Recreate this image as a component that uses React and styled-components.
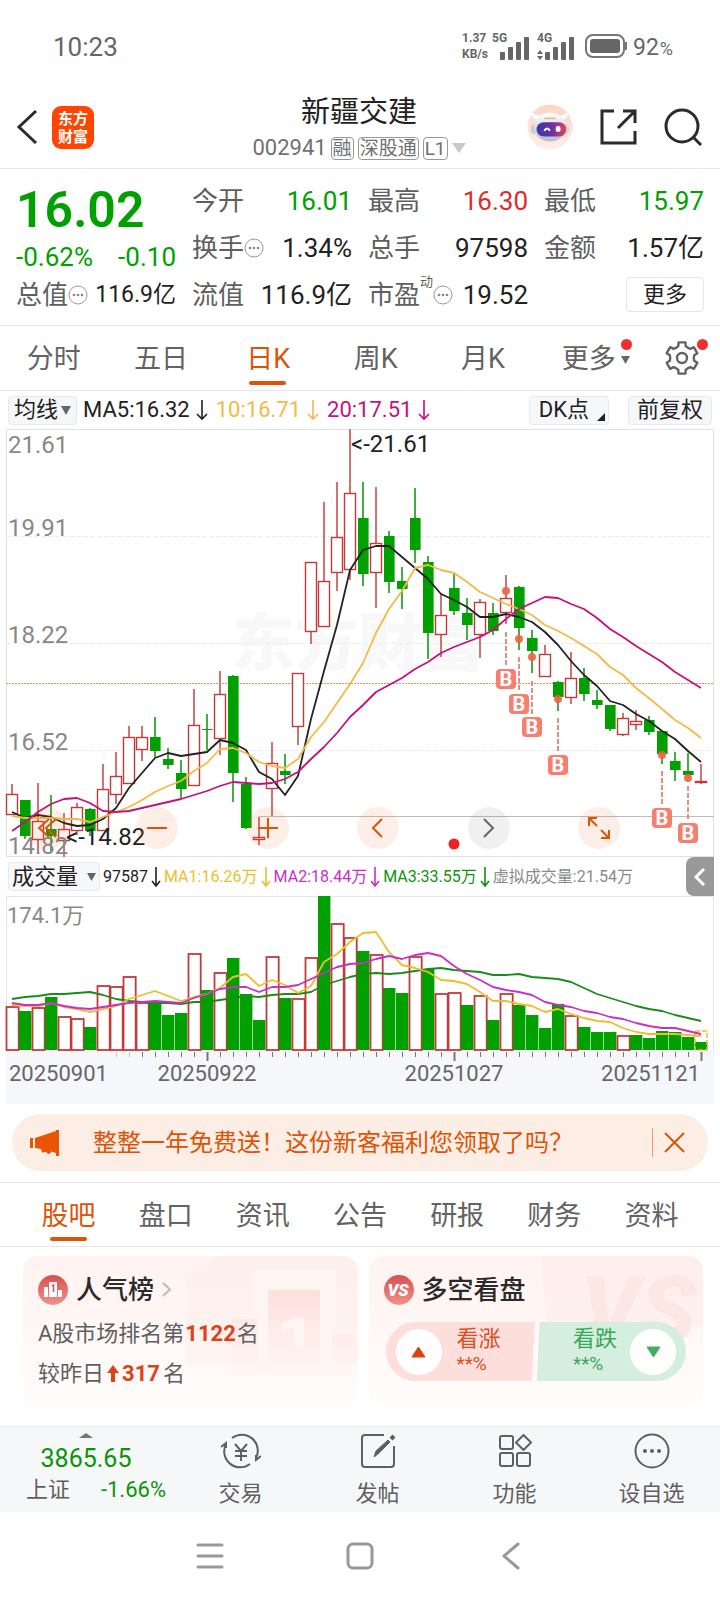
import React from 'react';
import styled, { createGlobalStyle } from 'styled-components';

const color = {
  green: '#00a000',
  red: '#ee2f2f',
  orange: '#dd5409',
  ink: '#222',
  text: '#5f5f5f',
  muted: '#8a8a8a',
  line: '#e6e6e8',
  panel: '#f6f7fa',
};

const Global = createGlobalStyle`
  * { box-sizing: border-box; }
  body {
    margin: 0;
    background: #fff;
    color: ${color.ink};
    font-family: Roboto, "Noto Sans CJK SC", sans-serif;
    font-size: 22px;
    line-height: 1;
  }
  button {
    margin: 0;
    padding: 0;
    border: 0;
    background: none;
    color: inherit;
    font: inherit;
    cursor: pointer;
  }
  svg { display: block; flex: none; }
  h1, h2, p, dl, dt, dd { margin: 0; font: inherit; }
`;

const Screen = styled.div`
  display: flex;
  flex-direction: column;
  width: 100%;
`;

/* ---------- status bar ---------- */

const StatusBar = styled.div`
  display: flex;
  align-items: center;
  justify-content: space-between;
  height: 84px;
  padding: 8px 47px 0 53px;
  color: #666;
`;

const Clock = styled.span`
  padding-top: 2px;
  font-size: 26px;
`;

const StatusGroup = styled.div`
  display: flex;
  align-items: center;
  gap: 4px;
`;

const NetSpeed = styled.span`
  font-size: 12px;
  line-height: 16px;
  font-weight: 700;
`;

const Battery = styled.span`
  display: flex;
  align-items: baseline;
  gap: 1px;
  padding: 2px 0 0 2px;
  font-size: 23px;
  small { font-size: 18px; }
`;

/* ---------- header ---------- */

const Header = styled.header`
  display: grid;
  grid-template-columns: 1fr auto 1fr;
  align-items: center;
  height: 85px;
  padding: 2px 18px 0 16px;
  border-bottom: 1px solid ${color.line};
`;

const HeaderSide = styled.div`
  display: flex;
  align-items: center;
  justify-content: ${(p) => (p.$end ? 'flex-end' : 'flex-start')};
  gap: ${(p) => (p.$end ? '27px' : '14px')};
`;

const Logo = styled.button`
  width: 42px;
  height: 43px;
  border-radius: 9px;
  background: #ff4500;
  color: #fff;
  font-family: "Noto Sans CJK SC", sans-serif;
  font-size: 15px;
  font-weight: 700;
  line-height: 18px;
`;

const TitleBlock = styled.div`
  display: flex;
  flex-direction: column;
  align-items: center;
  gap: 8px;
  padding-top: 2px;
`;

const StockName = styled.h1`
  font-size: 29px;
  line-height: 32px;
`;

const CodeRow = styled.div`
  display: flex;
  align-items: center;
  gap: 4px;
  color: #707070;
  font-size: 22px;
  line-height: 24px;
`;

const Badge = styled.span`
  height: 23px;
  padding: 0 1px;
  border: 1px solid #999;
  border-radius: 4px;
  font-size: 19px;
  line-height: 21px;
`;

/* ---------- quote ---------- */

const Quote = styled.section`
  display: grid;
  grid-template-columns: repeat(4, minmax(0, 1fr));
  grid-template-rows: repeat(3, 47px);
  column-gap: 16px;
  padding: 8px 16px 7px;
  border-bottom: 1px solid ${color.line};
  color: ${color.text};
  font-size: 26px;
`;

const PriceBlock = styled.div`
  display: flex;
  flex-direction: column;
  grid-row: span 2;
  color: ${color.green};
`;

const Price = styled.strong`
  font-size: 50px;
  font-weight: 600;
  line-height: 66px;
`;

const Change = styled.span`
  display: flex;
  justify-content: space-between;
  line-height: 28px;
`;

const Metric = styled.dl`
  display: flex;
  align-items: center;
  justify-content: space-between;
  white-space: nowrap;
  dt { display: flex; align-items: center; height: 47px; }
  dd { color: ${(p) => p.$tone || color.ink}; font-size: ${(p) => (p.$small ? '23px' : '26px')}; }
`;

const Sup = styled.sup`
  align-self: flex-start;
  padding-top: 4px;
  font-size: 13px;
  line-height: 1;
`;

const MoreButton = styled.button`
  align-self: center;
  justify-self: end;
  width: 78px;
  height: 35px;
  border: 1px solid ${color.line};
  border-radius: 4px;
  color: ${color.ink};
  font-size: 22px;
`;

/* ---------- tabs ---------- */

const TabBar = styled.nav`
  display: flex;
  height: 65px;
  padding: ${(p) => (p.$inset ? '0 20px' : '0')};
  border-top: ${(p) => (p.$inset ? `1px solid ${color.line}` : '0')};
  border-bottom: 1px solid ${color.line};
`;

const Tab = styled.button`
  position: relative;
  display: flex;
  flex: 1;
  align-items: center;
  justify-content: center;
  gap: 5px;
  padding-top: 3px;
  color: ${(p) => (p.$on ? color.orange : '#636363')};
  font-size: 27px;
  &::after {
    content: '';
    display: ${(p) => (p.$on ? 'block' : 'none')};
    position: absolute;
    left: calc(50% - 19px);
    bottom: 5px;
    width: 37px;
    height: 4px;
    border-radius: 2px;
    background: ${color.orange};
  }
`;

const MoreLabel = styled.span`
  padding-left: 11px;
`;

const GearTab = styled(Tab)`
  flex: 0 0 76px;
  padding-top: 0;
`;

const Dot = styled.i`
  position: absolute;
  top: 13px;
  right: 12px;
  width: 11px;
  height: 11px;
  border-radius: 50%;
  background: ${color.red};
`;

/* ---------- chart ---------- */

const ChartArea = styled.section`
  display: flex;
  flex-direction: column;
  padding: 0 6px;
`;

const LegendRow = styled.div`
  display: flex;
  align-items: center;
  gap: ${(p) => (p.$tight ? '3px' : '6px')};
  height: ${(p) => (p.$tight ? '39px' : '38px')};
  padding-left: 2px;
  font-size: ${(p) => (p.$tight ? '16px' : '22px')};
  white-space: nowrap;
`;

const Chip = styled.button`
  display: flex;
  align-items: center;
  justify-content: center;
  gap: ${(p) => (p.$wide ? '9px' : '3px')};
  height: 29px;
  padding: 0 ${(p) => (p.$wide ? '3px' : p.$roomy ? '8px' : '5px')};
  border: 1px solid #e6e9ee;
  border-radius: 4px;
  background: ${color.panel};
  color: ${color.ink};
  font-size: 22px;
`;

const CornerChip = styled(Chip)`
  gap: 8px;
  padding: 0 3px 0 9px;
  svg { align-self: flex-end; margin-bottom: 3px; }
`;

const Legend = styled.span`
  display: flex;
  align-items: center;
  gap: ${(p) => (p.$tight ? '2px' : '5px')};
  color: ${(p) => p.$c};
`;

const ChipGroup = styled.div`
  display: flex;
  gap: 19px;
  margin-left: auto;
  padding-right: 2px;
`;

const SideTab = styled.button`
  display: flex;
  align-items: center;
  justify-content: center;
  width: 28px;
  height: 39px;
  margin-left: auto;
  border-radius: 8px 0 0 8px;
  background: #999;
`;

const ChartBox = styled.div`
  position: relative;
  > svg { width: 100%; height: auto; overflow: visible; }
`;

const ChartTools = styled.div`
  position: absolute;
  left: 20px;
  right: 94px;
  bottom: 8px;
  display: flex;
  justify-content: space-between;
`;

const RoundTool = styled.button`
  display: flex;
  align-items: center;
  justify-content: center;
  width: 42px;
  height: 42px;
  border-radius: 50%;
  background: ${(p) => (p.$grey ? 'rgba(90, 90, 90, 0.09)' : 'rgba(240, 110, 40, 0.11)')};
`;

/* ---------- banner ---------- */

const Banner = styled.aside`
  display: flex;
  align-items: center;
  height: 57px;
  margin: 10px 12px 11px;
  padding: 0 23px 0 18px;
  border-radius: 29px;
  background: #fdeee5;
  color: ${color.orange};
  p { flex: 1; padding-left: 33px; font-size: 24px; white-space: nowrap; }
`;

const CloseButton = styled.button`
  padding: 4px 0 4px 11px;
  border-left: 1px solid #eb9a70;
`;

/* ---------- cards ---------- */

const Cards = styled.section`
  display: grid;
  grid-template-columns: repeat(2, minmax(0, 1fr));
  gap: 11px;
  padding: 9px 17px 20px 23px;
`;

const Card = styled.article`
  position: relative;
  display: flex;
  flex-direction: column;
  height: 150px;
  padding: 18px 15px 0;
  border-radius: 15px;
  overflow: hidden;
  background: linear-gradient(#fff3f1, #fffcfb);
  color: ${color.text};
  > * { position: relative; }
`;

const CardArt = styled.svg`
  && { position: absolute; }
  top: 0;
  right: 0;
`;

const CardTitle = styled.h2`
  display: flex;
  align-items: center;
  gap: 8px;
  height: 31px;
  color: #2b2b2b;
  font-size: 26px;
  font-weight: 500;
`;

const CardLine = styled.p`
  display: flex;
  align-items: center;
  gap: ${(p) => (p.$spaced ? '3px' : '1px')};
  height: 40px;
  b { color: #dc4318; }
  &:first-of-type { margin-top: 9px; }
`;

const Vote = styled.div`
  display: flex;
  gap: 2px;
  height: 59px;
  margin: 17px 2px 0;
  border-radius: 30px;
  overflow: hidden;
`;

const VoteSide = styled.button`
  display: flex;
  flex: 1;
  flex-direction: ${(p) => (p.$down ? 'row-reverse' : 'row')};
  align-items: center;
  gap: ${(p) => (p.$down ? '13px' : '15px')};
  padding: 0 10px;
  background: ${(p) => (p.$down ? '#d5eedd' : '#fcdedb')};
  color: ${(p) => (p.$down ? '#3aa75b' : '#e04b1f')};
  text-align: left;
  clip-path: ${(p) => (p.$down
    ? 'polygon(3px 0, 100% 0, 100% 100%, 0 100%)'
    : 'polygon(0 0, 100% 0, calc(100% - 3px) 100%, 0 100%)')};
  div { padding-bottom: 4px; }
  span { display: block; font-size: 22px; line-height: 27px; }
  small { display: block; font-size: 19px; line-height: 23px; }
`;

const VoteDot = styled.i`
  display: flex;
  align-items: center;
  justify-content: center;
  width: 46px;
  height: 46px;
  border-radius: 50%;
  background: #fff;
`;

/* ---------- bottom ---------- */

const BottomNav = styled.nav`
  display: flex;
  height: 86px;
  border-top: 1px solid ${color.line};
  background: #f6f7f9;
  color: ${color.text};
`;

const IndexButton = styled.button`
  display: flex;
  flex: 0 0 172px;
  flex-direction: column;
  align-items: center;
  padding-top: 6px;
  color: #0a940a;
`;

const IndexValue = styled.span`
  margin-top: 5px;
  font-size: 25px;
  line-height: 32px;
`;

const IndexRow = styled.span`
  display: flex;
  justify-content: space-between;
  align-self: flex-end;
  width: 146px;
  padding-right: 6px;
  line-height: 30px;
  em { color: ${color.text}; font-style: normal; }
`;

const NavButton = styled.button`
  display: flex;
  flex: 1;
  flex-direction: column;
  align-items: center;
  gap: 9px;
  padding-top: 6px;
  line-height: 32px;
`;

const SystemNav = styled.nav`
  display: flex;
  align-items: center;
  justify-content: center;
  gap: 122px;
  height: 88px;
`;

const Stroke = ({ w, h, d, c = color.text, sw = 2, fill = 'none', children, ...rest }) => (
  <svg width={w} height={h} viewBox={`0 0 ${w} ${h}`} fill={fill} stroke={c} strokeWidth={sw} {...rest}>
    {d && <path d={d} />}
    {children}
  </svg>
);

const Caret = ({ w = 9, h = 10, c = '#666' }) => (
  <svg width={w} height={h} viewBox="0 0 10 10" preserveAspectRatio="none"><path d="M0 0H10L5 10Z" fill={c} /></svg>
);

const DownArrow = ({ c, small }) => (
  <Stroke w={small ? 11 : 15} h={22} c={c} sw={1.6} d={small ? 'M6 1V20M2 15L6 20L10 15' : 'M7 1V20M2 15L7 20L12 15'} />
);

const InfoDot = () => (
  <Stroke w={20} h={20} c="#999" sw={1}>
    <circle cx="10" cy="10" r="9" />
    <g fill="#888" stroke="none"><circle cx="6" cy="10" r="1.3" /><circle cx="10" cy="10" r="1.3" /><circle cx="14" cy="10" r="1.3" /></g>
  </Stroke>
);

const STEP = 13;
const cx = (k) => 6 + STEP * k;

// direction, high, body top, body bottom, low — one entry per trading day
const candles = [
  ['r', 355, 365, 385, 385], ['g', 371, 371, 407, 410], ['r', 354, 392, 410, 424], ['g', 366, 400, 407, 423],
  ['r', 384, 400, 411, 428], ['r', 374, 378, 401, 406], ['g', 379, 380, 402, 407], ['r', 335, 360, 401, 402],
  ['r', 323, 347, 365, 375], ['r', 297, 308, 354, 354], ['r', 297, 308, 320, 332], ['g', 288, 308, 322, 328],
  ['g', 319, 330, 336, 340], ['g', 331, 344, 360, 369], ['r', 260, 296, 356, 356], ['g', 285, 300, 301, 321],
  ['r', 242, 265, 309, 326], ['g', 246, 247, 344, 373], ['g', 348, 355, 399, 400], ['r', 388, 408, 410, 416],
  ['r', 313, 334, 359, 387], ['g', 325, 342, 346, 355], ['r', 244, 244, 297, 316], ['r', 133, 133, 202, 215],
  ['r', 73, 152, 197, 197], ['r', 53, 108, 143, 162], ['r', 0, 64, 140, 151], ['g', 53, 89, 145, 157],
  ['r', 58, 114, 143, 179], ['g', 102, 107, 153, 164], ['g', 138, 152, 160, 180], ['g', 59, 89, 121, 134],
  ['g', 127, 133, 204, 230], ['r', 164, 186, 205, 228], ['g', 144, 159, 182, 186], ['g', 169, 184, 196, 211],
  ['r', 170, 173, 205, 229], ['g', 174, 184, 202, 206], ['r', 146, 169, 183, 195], ['g', 157, 158, 199, 221],
  ['g', 201, 209, 222, 244], ['r', 216, 225, 247, 248], ['g', 252, 253, 268, 282], ['r', 223, 249, 268, 275],
  ['g', 239, 249, 265, 272], ['g', 261, 271, 276, 280], ['g', 276, 276, 300, 302], ['r', 284, 289, 305, 307],
  ['r', 281, 292, 295, 301], ['g', 287, 291, 303, 306], ['g', 302, 302, 325, 335], ['g', 323, 332, 341, 352],
  ['g', 324, 342, 346, 349], ['r', 335, 352, 353, 355],
];

const ma5 = [383, 389, 386, 388, 394, 397, 396, 390, 379, 359, 344, 329, 324, 327, 325, 323, 311, 314, 321, 343, 350, 366, 347, 290, 242, 196, 141, 121, 117, 117, 128, 139, 150, 165, 171, 178, 188, 188, 185, 188, 193, 203, 216, 232, 246, 257, 272, 276, 285, 292, 302, 310, 322, 333];
const ma10 = [387, 389, 389, 389, 390, 390, 393, 388, 383, 378, 371, 363, 357, 352, 342, 334, 320, 319, 324, 333, 337, 339, 330, 308, 293, 274, 255, 234, 204, 180, 162, 139, 136, 141, 144, 153, 163, 169, 175, 180, 186, 196, 202, 209, 217, 225, 238, 246, 259, 269, 280, 291, 299, 309];
const ma20 = [402, 393, 383, 375, 370, 369, 374, 382, 383, 382, 379, 376, 373, 370, 366, 362, 357, 353, 354, 355, 354, 350, 343, 330, 318, 304, 288, 276, 263, 256, 249, 240, 233, 224, 218, 213, 208, 201, 190, 180, 174, 168, 169, 175, 180, 189, 200, 208, 217, 225, 233, 243, 251, 259];

const volumeTops = [110, 115, 111, 101, 120, 122, 131, 89, 90, 80, 106, 106, 119, 117, 57, 94, 76, 62, 98, 124, 60, 102, 102, 61, 0, 27, 41, 55, 58, 92, 97, 60, 73, 97, 96, 109, 99, 124, 97, 109, 119, 132, 108, 119, 131, 136, 136, 139, 139, 142, 135, 136, 141, 146];
const volumeUp = [0, 2, 4, 5, 7, 8, 9, 10, 14, 16, 20, 22, 23, 25, 26, 28, 31, 33, 34, 36, 38, 43, 47];
const vma1 = [109, 110, 110, 107, 111, 113, 116, 113, 110, 103, 99, 95, 100, 105, 101, 98, 92, 81, 78, 90, 84, 89, 97, 90, 66, 58, 46, 37, 36, 56, 69, 72, 76, 84, 85, 88, 96, 105, 105, 108, 110, 116, 113, 118, 122, 125, 126, 132, 136, 138, 138, 138, 139, 140];
const vma2 = [107, 109, 109, 107, 110, 112, 113, 111, 109, 107, 106, 105, 106, 107, 102, 98, 93, 91, 91, 96, 91, 91, 89, 83, 77, 71, 68, 67, 63, 60, 63, 59, 57, 60, 70, 78, 84, 91, 94, 96, 99, 106, 109, 111, 115, 117, 121, 123, 127, 130, 132, 132, 135, 138];
const vma3 = [103, 101, 100, 98, 98, 97, 96, 99, 103, 105, 106, 107, 107, 108, 106, 106, 104, 102, 100, 101, 99, 98, 98, 96, 89, 85, 81, 78, 77, 78, 77, 75, 73, 72, 74, 75, 76, 79, 79, 78, 81, 82, 83, 86, 92, 98, 102, 106, 110, 113, 115, 119, 122, 125];

// day, signal dot, dash start, dash end, centre of the badge
const buySignals = [
  [38, 162, 203, 238, 250], [39, 210, 228, 263, 275], [40, 228, 252, 286, 298],
  [42, 270, 289, 324, 336], [50, 326, 342, 377, 389], [52, 349, 357, 391, 404],
];

const Line = ({ data, c }) => (
  <polyline points={data.map((y, k) => `${cx(k)},${y}`).join(' ')} fill="none" stroke={c} strokeWidth="1.8" strokeLinejoin="round" />
);

const PriceChart = () => (
  <svg viewBox="0 0 708 428" role="img" aria-label="日K" fontSize="24">
    <text x="226" y="236" fontSize="63" fontWeight="900" fill="#f8f8f8">东方财富</text>
    <g stroke="#ececec" strokeDasharray="5 2">
      <path d="M0 107.5H708M0 214.5H708M0 321.5H708" />
    </g>
    <path d="M.5 428V.5H707.5V428M0 427.5H708" fill="none" stroke="#e2e2e4" />
    <path d="M253 387.5H708" stroke="#bdbdbd" />
    <path d="M0 254.5H708" stroke="#d29a68" strokeDasharray="2 1" />
    {candles.map(([dir, hi, top, bot, lo], k) => {
      const up = dir === 'r';
      const h = Math.max(bot - top, 1);
      return (
        <g key={k}>
          <path d={`M${cx(k)} ${hi}V${top}M${cx(k)} ${bot}V${lo}`} stroke={up ? '#cf7373' : '#45ad45'} strokeWidth="2" />
          {up
            ? <rect x={cx(k) - 5.5} y={top + 0.5} width="11" height={h} fill="#fff" stroke="#c23b3b" strokeWidth="1.4" />
            : <rect x={cx(k) - 5} y={top} width="10.6" height={h} fill={color.green} />}
        </g>
      );
    })}
    <g fill="#888">
      <text x="2" y="24">21.61</text>
      <text x="2" y="107">19.91</text>
      <text x="2" y="214">18.22</text>
      <text x="2" y="321">16.52</text>
      <text x="2" y="425">14.82</text>
    </g>
    <Line data={ma5} c="#222" />
    <Line data={ma10} c="#f5b946" />
    <Line data={ma20} c="#c3127e" />
    {buySignals.map(([k, dot, from, to, mid]) => (
      <g key={k}>
        <circle cx={cx(k)} cy={dot} r="4" fill="#f2603f" fillOpacity=".9" />
        <path d={`M${cx(k)} ${from}V${to}`} stroke="#e2735f" strokeWidth="1.6" strokeDasharray="5 2" />
        <rect x={cx(k) - 10} y={mid - 10} width="20" height="20" rx="4" fill="#f87f6f" />
        <text x={cx(k)} y={mid + 7} fontSize="20" fontWeight="700" textAnchor="middle" fill="#fff">B</text>
      </g>
    ))}
    <g fill={color.ink}>
      <text x="345" y="23">&lt;-21.61</text>
      <text x="60" y="416">&lt;-14.82</text>
    </g>
    <circle cx="448" cy="415" r="5.5" fill="#ef2222" />
  </svg>
);

const VolumeChart = () => (
  <svg viewBox="0 0 708 155" role="img" aria-label="成交量" fontSize="22">
    <path d="M.5 155V.5H707.5V155" fill="none" stroke="#e6e6e8" />
    {volumeTops.map((top, k) => (volumeUp.includes(k)
      ? <rect key={k} x={cx(k) - 5.5} y={top + 1} width="12.2" height={153 - top} fill="#fff" stroke="#c23b3b" strokeWidth="1.8" />
      : <rect key={k} x={cx(k) - 6} y={top} width="12.4" height={154 - top} fill={color.green} />))}
    <rect x="689" y="135" width="12" height="19" fill="none" stroke="#eebc2c" strokeWidth="1.5" strokeDasharray="5 2" />
    <text x="1" y="27" fill="#888">174.1万</text>
    <Line data={vma3} c="#1b8c1b" />
    <Line data={vma1} c="#edbd2e" />
    <Line data={vma2} c="#c92fc9" />
  </svg>
);

const TimeAxis = () => (
  <svg viewBox="0 0 708 53" role="img" aria-label="日期" fontSize="22">
    <rect width="708" height="53" fill={color.panel} />
    {candles.map((_, k) => {
      if (k < 8) return null;
      const major = k === 15 || k === 34 || k === 53;
      return <path key={k} d={`M${cx(k) + 0.5} 1V${major ? 10 : 6}`} stroke="#777" strokeWidth={major ? 2 : 1} strokeOpacity={k < 10 ? 0.4 : 1} />;
    })}
    <g fill="#666">
      <text x="3" y="30">20250901</text>
      <text x="201" y="30" textAnchor="middle">20250922</text>
      <text x="448" y="30" textAnchor="middle">20251027</text>
      <text x="694" y="30" textAnchor="end">20251121</text>
    </g>
  </svg>
);

const SignalIcons = () => (
  <svg width="83" height="28" viewBox="0 0 83 28" fill="#666" fontWeight="700" fontSize="12">
    <text x="0" y="10">5G</text>
    <text x="45" y="10">4G</text>
    <g>
      <rect x="8" y="20" width="5" height="8" rx="1" /><rect x="16" y="15" width="5" height="13" rx="1" />
      <rect x="24" y="10" width="5" height="18" rx="1" /><rect x="32" y="5" width="5" height="23" rx="1" />
      <rect x="53" y="20" width="5" height="8" rx="1" /><rect x="61" y="15" width="5" height="13" rx="1" />
      <rect x="69" y="10" width="5" height="18" rx="1" /><rect x="77" y="5" width="5" height="23" rx="1" />
    </g>
    <path d="M45 22L48 18L51 22ZM45 24H51L48 28Z" />
  </svg>
);

const Robot = () => (
  <svg width="46" height="46" viewBox="0 0 48 48">
    <defs>
      <linearGradient id="halo" x1="0" y1="0" x2="0" y2="1"><stop offset="0" stopColor="#fdd5c2" /><stop offset="1" stopColor="#fdf0e8" /></linearGradient>
      <linearGradient id="visor"><stop offset="0" stopColor="#3b3aa8" /><stop offset=".5" stopColor="#6a2fa6" /><stop offset="1" stopColor="#e2465d" /></linearGradient>
      <linearGradient id="shell" x1="0" y1="0" x2="0" y2="1"><stop offset="0" stopColor="#fff" /><stop offset="1" stopColor="#b9bdcb" /></linearGradient>
    </defs>
    <circle cx="24" cy="24" r="23.5" fill="url(#halo)" />
    <path d="M10 17C4 14 3 10 5 8C7 11 11 12 15 12M34 12C38 12 40 10 42 8C44 11 42 15 38 17" fill="#fff" stroke="#e6e0e0" strokeWidth=".6" />
    <ellipse cx="7" cy="26" rx="3" ry="5" fill="#c9ccd6" /><ellipse cx="41" cy="26" rx="3" ry="5" fill="#d7d8df" />
    <ellipse cx="24" cy="24" rx="17" ry="15" fill="url(#shell)" />
    <rect x="18" y="14" width="12" height="2" rx="1" fill="#e9b79c" />
    <rect x="10" y="19" width="31" height="15" rx="7.5" fill="url(#visor)" />
    <path d="M18 28Q21 23 24 28" fill="none" stroke="#fff" strokeWidth="2" />
    <rect x="30" y="23" width="5" height="6" rx="2" fill="#fff" />
  </svg>
);

const Gear = () => {
  const points = [];
  for (let i = 0; i < 6; i += 1) {
    const a = (i * Math.PI) / 3;
    [[-0.3, 12.5], [-0.22, 16], [0.22, 16], [0.3, 12.5], [0.52, 11.8]].forEach(([off, r]) => {
      points.push(`${(17 + r * Math.sin(a + off)).toFixed(1)},${(17 - r * Math.cos(a + off)).toFixed(1)}`);
    });
  }
  return (
    <Stroke w={34} h={34} c="#636363" sw={2.4}>
      <polygon points={points.join(' ')} strokeLinejoin="round" />
      <circle cx="17" cy="17" r="5" />
    </Stroke>
  );
};

const metrics = [
  { label: '今开', value: '16.01', tone: color.green },
  { label: '最高', value: '16.30', tone: '#dd2b2b' },
  { label: '最低', value: '15.97', tone: color.green },
  { label: '换手', value: '1.34%', info: true },
  { label: '总手', value: '97598' },
  { label: '金额', value: '1.57亿' },
  { label: '总值', value: '116.9亿', info: true, small: true },
  { label: '流值', value: '116.9亿' },
  { label: '市盈', value: '19.52', info: true, sup: '动' },
];

const volumeLegend = [
  ['97587', '#222'], ['MA1:16.26万', '#edbd2e'], ['MA2:18.44万', '#c92fc9'], ['MA3:33.55万', '#0b950b'],
];

const navItems = [
  ['交易', (
    <Stroke w={40} h={36} key="t">
      <path d="M11 5A16 16 0 0 1 35 25M29 31A16 16 0 0 1 5 11M0 14L5 10V15M40 23L35 27V22" />
      <path d="M14 11L20 18L26 11M20 18V28M14 18H26M14 23H26" />
    </Stroke>
  )],
  ['发帖', (
    <Stroke w={36} h={36} key="p">
      <path d="M24 2H5Q2 2 2 5V31Q2 34 5 34H31Q34 34 34 31V13" />
      <path d="M14 24L16 18L28 7L30 9L19 20Z" fill={color.text} strokeWidth="1" />
      <path d="M31 6L34 3" strokeWidth="4" />
    </Stroke>
  )],
  ['功能', (
    <Stroke w={34} h={36} key="f">
      <rect x="2" y="3" width="13" height="13" rx="2" /><rect x="2" y="20" width="13" height="13" rx="2" />
      <rect x="19" y="20" width="13" height="13" rx="2" /><path d="M25.500 2L33 9.500L25.500 17L18 9.500Z" strokeLinejoin="round" />
    </Stroke>
  )],
  ['设自选', (
    <Stroke w={36} h={36} key="s">
      <circle cx="18" cy="18" r="16.500" />
      <g fill={color.text} stroke="none"><circle cx="11" cy="18" r="2" /><circle cx="18" cy="18" r="2" /><circle cx="25" cy="18" r="2" /></g>
    </Stroke>
  )],
];

export default function App() {
  return (
    <Screen>
      <Global />
      <StatusBar>
        <Clock>10:23</Clock>
        <StatusGroup>
          <NetSpeed>1.37<br />KB/s</NetSpeed>
          <SignalIcons />
          <Stroke w={48} h={24} c="#777" sw={2}>
            <rect x="7" y="1" width="38" height="22" rx="7" />
            <rect x="11" y="5" width="30" height="14" rx="3" fill="#666" stroke="none" />
            <path d="M47 8V16" />
          </Stroke>
          <Battery>92<small>%</small></Battery>
        </StatusGroup>
      </StatusBar>

      <Header>
        <HeaderSide>
          <button aria-label="返回"><Stroke w={22} h={36} c="#2b2b2b" sw={3} d="M20 2L3 18L20 34" /></button>
          <Logo>东方<br />财富</Logo>
        </HeaderSide>
        <TitleBlock>
          <StockName>新疆交建</StockName>
          <CodeRow>
            002941<Badge>融</Badge><Badge>深股通</Badge><Badge>L1</Badge>
            <Caret w={14} h={10} c="#c9c9c9" />
          </CodeRow>
        </TitleBlock>
        <HeaderSide $end>
          <button aria-label="智能助手"><Robot /></button>
          <button aria-label="分享"><Stroke w={37} h={36} c="#2b2b2b" sw={3} d="M14 2H2V34H35V22M23 2H35V14M35 2L18 19" /></button>
          <button aria-label="搜索"><Stroke w={38} h={38} c="#2b2b2b" sw={3}><circle cx="18" cy="18" r="16" /><path d="M29 29L37 37" /></Stroke></button>
        </HeaderSide>
      </Header>

      <Quote>
        <PriceBlock>
          <Price>16.02</Price>
          <Change><span>-0.62%</span><span>-0.10</span></Change>
        </PriceBlock>
        {metrics.map((m) => (
          <Metric key={m.label} $tone={m.tone} $small={m.small}>
            <dt>{m.label}{m.sup && <Sup>{m.sup}</Sup>}{m.info && <InfoDot />}</dt>
            <dd>{m.value}</dd>
          </Metric>
        ))}
        <MoreButton>更多</MoreButton>
      </Quote>

      <TabBar>
        {['分时', '五日', '日K', '周K', '月K'].map((t) => <Tab key={t} $on={t === '日K'}>{t}</Tab>)}
        <Tab><MoreLabel>更多</MoreLabel><Caret w={9} h={8} /><Dot /></Tab>
        <GearTab aria-label="设置"><Gear /><Dot /></GearTab>
      </TabBar>

      <ChartArea>
        <LegendRow>
          <Chip>均线<Caret w={10} h={9} /></Chip>
          <Legend $c="#222">MA5:16.32<DownArrow c="#222" /></Legend>
          <Legend $c="#f5b946">10:16.71<DownArrow c="#f5b946" /></Legend>
          <Legend $c="#c3127e">20:17.51<DownArrow c="#c3127e" /></Legend>
          <ChipGroup>
            <CornerChip>DK点<svg width="8" height="8"><path d="M8 0V8H0Z" fill="#222" /></svg></CornerChip>
            <Chip $roomy>前复权</Chip>
          </ChipGroup>
        </LegendRow>
        <ChartBox>
          <PriceChart />
          <ChartTools>
            <RoundTool aria-label="最早"><Stroke w={20} h={22} c={color.orange} d="M12 2L2 11L12 20M19 2L9 11L19 20" /></RoundTool>
            <RoundTool aria-label="缩小"><Stroke w={20} h={20} c={color.orange} d="M0 10H20" /></RoundTool>
            <RoundTool aria-label="放大"><Stroke w={20} h={20} c={color.orange} d="M0 10H20M10 0V20" /></RoundTool>
            <RoundTool aria-label="左移"><Stroke w={14} h={20} c={color.orange} d="M11 1L2 10L11 19" /></RoundTool>
            <RoundTool aria-label="右移" $grey><Stroke w={12} h={20} c="#666" d="M1 1L10 10L1 19" /></RoundTool>
            <RoundTool aria-label="全屏"><Stroke w={22} h={22} c={color.orange} d="M1 9V1H9M1 1L9 9M21 13V21H13M21 21L13 13" /></RoundTool>
          </ChartTools>
        </ChartBox>
        <LegendRow $tight>
          <Chip $wide>成交量<Caret w={9} h={8} /></Chip>
          {volumeLegend.map(([t, c]) => <Legend key={t} $c={c} $tight>{t}<DownArrow c={c} small /></Legend>)}
          <Legend $c={color.muted}>虚拟成交量:21.54万</Legend>
          <SideTab aria-label="展开"><Stroke w={12} h={18} c="#fff" sw={3} d="M10 1L2 9L10 17" /></SideTab>
        </LegendRow>
        <ChartBox><VolumeChart /></ChartBox>
        <ChartBox><TimeAxis /></ChartBox>
      </ChartArea>

      <Banner>
        <svg width="30" height="26" viewBox="0 0 30 26" fill="#ea5504">
          <path d="M0 8H3V18H0ZM5 8L26 1V0H29V26H26V23L21 21.500V23L18 24L16 22L12 22.500L11 19L5 18Z" />
        </svg>
        <p>整整一年免费送！这份新客福利您领取了吗？</p>
        <CloseButton aria-label="关闭"><Stroke w={21} h={21} c={color.orange} d="M1 1L20 20M20 1L1 20" /></CloseButton>
      </Banner>

      <TabBar $inset>
        {['股吧', '盘口', '资讯', '公告', '研报', '财务', '资料'].map((t) => <Tab key={t} $on={t === '股吧'}>{t}</Tab>)}
      </TabBar>

      <Cards>
        <Card>
          <CardArt width="172" height="150" viewBox="0 0 172 150">
            <defs>
              <linearGradient id="podium" x1="0" y1="0" x2="0" y2="1"><stop offset="0" stopColor="#fde0dc" /><stop offset="1" stopColor="#fff8f6" /></linearGradient>
            </defs>
            <path d="M32 0H172V110H0V20H28V50H0V20Z" fill="#fdeae7" fillOpacity=".4" />
            <path d="M68 15H150V122H68Z" fill="#fff7f5" fillOpacity=".7" />
            <path d="M82 34H134V122H82ZM46 63H72V122H46ZM146 78H166V122H146Z" fill="url(#podium)" />
            <path d="M96 68L110 61H118V92H108V72L96 76Z" fill="#fff5f3" />
          </CardArt>
          <CardTitle>
            <svg width="30" height="30" viewBox="0 0 30 30">
              <defs><linearGradient id="disc" x1="0" y1="0" x2="0" y2="1"><stop offset="0" stopColor="#d84f4f" /><stop offset="1" stopColor="#f1918c" /></linearGradient></defs>
              <circle cx="15" cy="15" r="15" fill="url(#disc)" />
              <path d="M6 12H10V22H6ZM11 7H19V22H11ZM20 15H24V22H20Z" fill="#fff" />
              <path d="M14 11L15.500 10V17" fill="none" stroke="#d84f4f" strokeWidth="1.500" />
            </svg>
            人气榜
            <Stroke w={9} h={15} c="#bbb" d="M1 1L8 7.500L1 14" />
          </CardTitle>
          <CardLine>A股市场排名第<b>1122</b>名</CardLine>
          <CardLine $spaced>
            较昨日
            <svg width="12" height="18" viewBox="0 0 12 18"><path d="M6 0L12 8H8V17H4V8H0Z" fill="#dc4318" /></svg>
            <b>317</b>
            <span>名</span>
          </CardLine>
        </Card>
        <Card>
          <CardArt width="162" height="150" viewBox="0 0 162 150">
            <path d="M0 0H162V70H6Z" fill="#fdeae7" fillOpacity=".5" />
            <text x="40" y="86" fontSize="92" fontWeight="900" fontStyle="italic" fill="#fce7e4">VS</text>
          </CardArt>
          <CardTitle>
            <svg width="30" height="30" viewBox="0 0 30 30">
              <circle cx="15" cy="15" r="15" fill="url(#disc)" />
              <text x="14" y="21" fontSize="17" fontWeight="900" fontStyle="italic" textAnchor="middle" fill="#fff">VS</text>
            </svg>
            多空看盘
          </CardTitle>
          <Vote>
            <VoteSide>
              <VoteDot><svg width="15" height="12"><path d="M7.500 1L14 11H1Z" fill="#e0400f" stroke="#e0400f" strokeLinejoin="round" /></svg></VoteDot>
              <div><span>看涨</span><small>**%</small></div>
            </VoteSide>
            <VoteSide $down>
              <VoteDot><svg width="15" height="12"><path d="M1 1H14L7.500 11Z" fill="#3fae60" stroke="#3fae60" strokeLinejoin="round" /></svg></VoteDot>
              <div><span>看跌</span><small>**%</small></div>
            </VoteSide>
          </Vote>
        </Card>
      </Cards>

      <BottomNav>
        <IndexButton>
          <svg width="14" height="5"><path d="M0 5L7 0L14 5Z" fill="#777" /></svg>
          <IndexValue>3865.65</IndexValue>
          <IndexRow><em>上证</em><span>-1.66%</span></IndexRow>
        </IndexButton>
        {navItems.map(([label, icon]) => <NavButton key={label}>{icon}{label}</NavButton>)}
      </BottomNav>

      <SystemNav>
        <button aria-label="菜单"><Stroke w={28} h={28} c="#999" sw={3} strokeLinecap="round" d="M2 3H26M2 14H26M2 25H26" /></button>
        <button aria-label="主页"><Stroke w={28} h={28} c="#999" sw={3}><rect x="2" y="2" width="24" height="24" rx="5" /></Stroke></button>
        <button aria-label="返回上一页"><Stroke w={28} h={28} c="#999" sw={3} strokeLinecap="round" strokeLinejoin="round" d="M22 2L8 14L22 26" /></button>
      </SystemNav>
    </Screen>
  );
}
